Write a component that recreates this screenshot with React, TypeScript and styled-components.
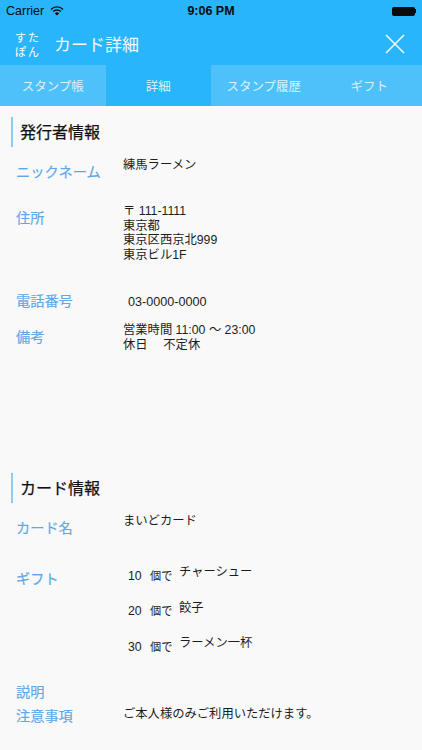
import React from 'react';
import styled, { createGlobalStyle } from 'styled-components';

const GlobalStyle = createGlobalStyle`
  html, body {
    margin: 0;
    padding: 0;
    background: #f9f9f9;
  }
  body {
    font-family: "Liberation Sans", "Noto Sans CJK JP", sans-serif;
  }
`;

const Screen = styled.div`
  width: 422px;
  height: 750px;
  overflow: hidden;
  background: #f9f9f9;
`;

const Header = styled.header`
  background: #29b5f9;
  color: #fff;
`;

const StatusBar = styled.div`
  height: 22px;
  padding: 0 6px;
  display: grid;
  grid-template-columns: 1fr auto 1fr;
  align-items: center;
  color: #0b0b0b;
  font-size: 12.5px;
`;

const Carrier = styled.div`
  display: flex;
  align-items: center;
  gap: 6px;
`;

const Clock = styled.div`
  font-weight: 700;
  font-size: 12.5px;
`;

const Battery = styled.div`
  justify-self: end;
  display: flex;
  align-items: center;
`;

const BatteryBody = styled.div`
  width: 23px;
  height: 9px;
  background: #0b0b0b;
  border-radius: 2px;
`;

const BatteryTip = styled.div`
  width: 1.5px;
  height: 4px;
  background: #0b0b0b;
`;

const NavBar = styled.div`
  height: 43px;
  padding: 0 17px 0 14px;
  display: flex;
  align-items: center;
`;

const Logo = styled.div`
  width: 26px;
  padding-top: 2px;
  display: grid;
  grid-template-columns: 1fr 1fr;
  font-size: 11px;
  line-height: 14px;
  text-align: center;
  margin-right: 14px;
`;

const NavTitle = styled.div`
  flex: 1;
  font-size: 17px;
  color: #f0f9ff;
`;

const Tabs = styled.nav`
  height: 41px;
  display: grid;
  grid-template-columns: repeat(4, 1fr);
  background: #4ec1fa;
`;

const Tab = styled.div<{ $active?: boolean }>`
  display: flex;
  align-items: center;
  justify-content: center;
  font-size: 12.5px;
  color: #d8f1fe;
  background: ${props => (props.$active ? '#29b5f9' : 'transparent')};
`;

const Content = styled.main`
  padding: 11px 0 0 11px;
`;

const Section = styled.section<{ $height: number }>`
  height: ${props => props.$height}px;
`;

const SectionTitle = styled.h2`
  margin: 0 0 10px;
  height: 30px;
  border-left: 2px solid #8ccbf2;
  padding-left: 7px;
  font-size: 16px;
  font-weight: 400;
  -webkit-text-stroke: 0.25px #111;
  line-height: 32px;
  color: #111;
`;

const Row = styled.div<{ $height: number }>`
  height: ${props => props.$height}px;
  display: grid;
  grid-template-columns: 107px 1fr;
  padding-left: 5px;
`;

const Label = styled.div<{ $top?: number }>`
  padding-top: ${props => props.$top ?? 0}px;
  font-size: 14.2px;
  line-height: 18px;
  color: #5fa9e8;
  -webkit-text-stroke: 0.2px #5fa9e8;
`;

const Value = styled.div<{ $top?: number; $phone?: boolean }>`
  padding-top: ${props => props.$top ?? 1}px;
  padding-left: ${props => (props.$phone ? 5 : 0)}px;
  font-size: ${props => (props.$phone ? 12.6 : 12.3)}px;
  line-height: 14.6px;
  color: #1c1c1c;
  white-space: pre;
`;

const GiftList = styled.div`
  padding: 2.5px 0 0 5px;
  display: grid;
  gap: 16.7px;
  align-content: start;
`;

const GiftRow = styled.div`
  height: 19px;
  display: grid;
  grid-template-columns: 22px 29px 1fr;
  font-size: 12.3px;
  line-height: 19px;
  color: #1c1c1c;
`;

const GiftUnit = styled.span`
  font-size: 11.2px;
`;

const GiftName = styled.span`
  margin-top: -3.5px;
`;

const gifts = [
  { count: '10', name: 'チャーシュー' },
  { count: '20', name: '餃子' },
  { count: '30', name: 'ラーメン一杯' },
];

const tabs = ['スタンプ帳', '詳細', 'スタンプ履歴', 'ギフト'];

const App: React.FC = () => (
  <Screen>
    <GlobalStyle />
    <Header>
      <StatusBar>
        <Carrier>
          Carrier
          <svg width="14" height="10" viewBox="0 0 14 10">
            <path d="M1 3.4 A8.5 8.5 0 0 1 13 3.4" fill="none" stroke="#0b0b0b" strokeWidth="1.4" />
            <path d="M3.2 5.5 A5.4 5.4 0 0 1 10.8 5.5" fill="none" stroke="#0b0b0b" strokeWidth="1.4" />
            <path d="M7 9.6 L4.9 7.4 A3 3 0 0 1 9.1 7.4 Z" fill="#0b0b0b" />
          </svg>
        </Carrier>
        <Clock>9:06 PM</Clock>
        <Battery>
          <BatteryBody />
          <BatteryTip />
        </Battery>
      </StatusBar>
      <NavBar>
        <Logo>
          <span>す</span>
          <span>た</span>
          <span>ぽ</span>
          <span>ん</span>
        </Logo>
        <NavTitle>カード詳細</NavTitle>
        <svg width="20" height="20" viewBox="0 0 20 20">
          <path d="M1 1 L19 19 M19 1 L1 19" stroke="#f0f9ff" strokeWidth="1.6" fill="none" />
        </svg>
      </NavBar>
      <Tabs>
        {tabs.map(tab => (
          <Tab key={tab} $active={tab === '詳細'}>{tab}</Tab>
        ))}
      </Tabs>
    </Header>
    <Content>
      <Section $height={356}>
        <SectionTitle>発行者情報</SectionTitle>
        <Row $height={46}>
          <Label $top={6}>ニックネーム</Label>
          <Value>練馬ラーメン</Value>
        </Row>
        <Row $height={89}>
          <Label $top={6}>住所</Label>
          <Value>{'〒 111-1111\n東京都\n東京区西京北999\n東京ビル1F'}</Value>
        </Row>
        <Row $height={30}>
          <Label>電話番号</Label>
          <Value $top={3} $phone>03-0000-0000</Value>
        </Row>
        <Row $height={60}>
          <Label $top={6}>備考</Label>
          <Value>{'営業時間 11:00 〜 23:00\n休日\u3000 不定休'}</Value>
        </Row>
      </Section>
      <Section $height={277}>
        <SectionTitle>カード情報</SectionTitle>
        <Row $height={51}>
          <Label $top={6}>カード名</Label>
          <Value>まいどカード</Value>
        </Row>
        <Row $height={119}>
          <Label $top={6}>ギフト</Label>
          <GiftList>
            {gifts.map(gift => (
              <GiftRow key={gift.count}>
                <span>{gift.count}</span>
                <GiftUnit>個で</GiftUnit>
                <GiftName>{gift.name}</GiftName>
              </GiftRow>
            ))}
          </GiftList>
        </Row>
        <Row $height={23}>
          <Label>説明</Label>
        </Row>
        <Row $height={39}>
          <Label $top={1}>注意事項</Label>
          <Value>ご本人様のみご利用いただけます。</Value>
        </Row>
      </Section>
    </Content>
  </Screen>
);

export default App;
